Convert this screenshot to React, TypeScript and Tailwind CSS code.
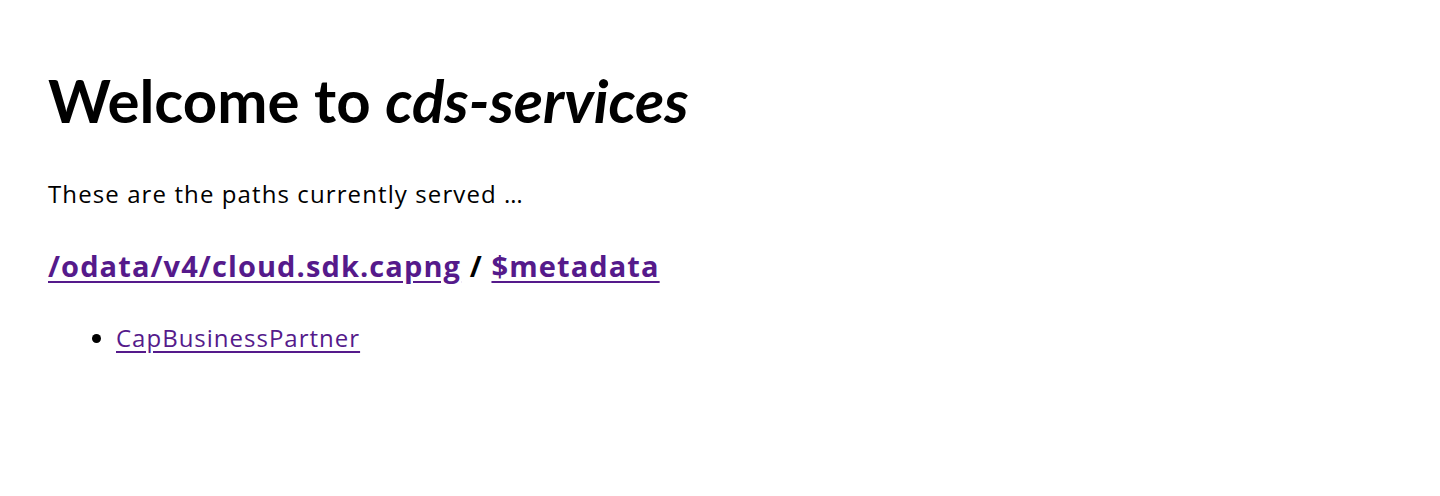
export default function App() {
  return (
    <main className="min-h-screen bg-white px-12 pt-[70px] text-black font-['Open_Sans','Liberation_Sans',sans-serif]">
      <h1 className="text-[60px] font-bold leading-[60px] font-['Lato','Liberation_Sans',sans-serif]">
        Welcome to <i>cds-services</i>
      </h1>

      <p className="mt-12 text-[24px] leading-8 tracking-[1.1px]">These are the paths currently served …</p>

      <h2 className="mt-[38px] text-[29px] font-bold leading-9 tracking-[1.1px]">
        <a href="#" className="text-[#551a8b] underline underline-offset-4">
          /odata/v4/cloud.sdk.capng
        </a>{" "}
        /{" "}
        <a href="#" className="text-[#551a8b] underline underline-offset-4">
          $metadata
        </a>
      </h2>

      <ul className="mt-[38px] list-disc pl-[68px] text-[24px] leading-8 tracking-[1px]">
        <li>
          <a href="#" className="text-[#551a8b] underline underline-offset-4">
            CapBusinessPartner
          </a>
        </li>
      </ul>
    </main>
  );
}
